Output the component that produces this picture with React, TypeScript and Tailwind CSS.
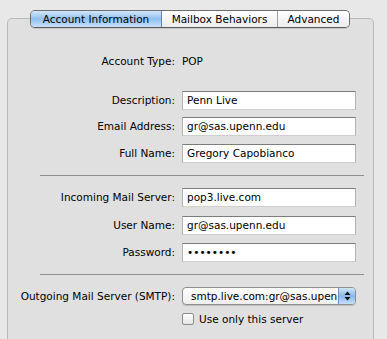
import React from "react";

const font = { fontFamily: '"DejaVu Sans", "Lucida Grande", sans-serif' };

function Field({ label, value, mt }: { label: string; value: string; mt: string }) {
  return (
    <div className={`flex items-center h-[19px] ${mt}`}>
      <div className="w-[167px] text-right text-[10.5px] text-black leading-none">{label}</div>
      <div className="ml-[7px] w-[174px] h-[19px] bg-white border border-[#b3b3b3] border-t-[#7d7d7d] border-b-[#cfcfcf] flex items-center pl-[4px] text-[10.5px] text-black leading-none overflow-hidden whitespace-nowrap">
        {value}
      </div>
    </div>
  );
}

export default function App() {
  return (
    <div className="w-[387px] h-[339px] bg-[#e8e8e8] overflow-hidden pt-[18px] pl-[7px]" style={font}>
      <div className="relative w-[367px] h-[340px] bg-[#e0e0e0] border border-[#bababa] rounded-t-[5px]">
        {/* Tabs */}
        <div className="absolute left-[22px] top-[-9px] flex h-[18px] rounded-[5px] border border-[#6e6e6e] border-b-[#5a5a5a] overflow-hidden shadow-[0_1px_1px_rgba(0,0,0,0.12)]">
          <div className="w-[131px] flex items-center justify-center text-[10.5px] text-black leading-none bg-gradient-to-b from-[#d3e6fa] via-[#8fbfef] to-[#c9e2fb] border-r border-[#6a83a8]">
            Account Information
          </div>
          <div className="w-[116px] flex items-center justify-center text-[10.5px] text-black leading-none bg-gradient-to-b from-[#ffffff] to-[#ececec] border-r border-[#a0a0a0]">
            Mailbox Behaviors
          </div>
          <div className="w-[71px] flex items-center justify-center text-[10.5px] text-black leading-none bg-gradient-to-b from-[#ffffff] to-[#ececec]">
            Advanced
          </div>
        </div>

        <div className="pt-[33px]">
          <div className="flex items-center h-[19px]">
            <div className="w-[167px] text-right text-[10.5px] text-black leading-none">Account Type:</div>
            <div className="ml-[7px] text-[10.5px] text-black leading-none">POP</div>
          </div>

          <Field label="Description:" value="Penn Live" mt="mt-[20px]" />
          <Field label="Email Address:" value="gr@sas.upenn.edu" mt="mt-[7px]" />
          <Field label="Full Name:" value="Gregory Capobianco" mt="mt-[8px]" />

          <div className="mt-[12px] ml-[32px] w-[324px] h-px bg-[#8e8e8e]" />

          <Field label="Incoming Mail Server:" value="pop3.live.com" mt="mt-[12px]" />
          <Field label="User Name:" value="gr@sas.upenn.edu" mt="mt-[9px]" />
          <Field label="Password:" value="••••••••" mt="mt-[8px]" />

          <div className="mt-[12px] ml-[32px] w-[324px] h-px bg-[#8e8e8e]" />

          <div className="flex items-center h-[18px] mt-[12px]">
            <div className="w-[167px] text-right text-[10.5px] text-black leading-none">Outgoing Mail Server (SMTP):</div>
            <div className="ml-[7px] w-[174px] h-[18px] flex rounded-[4px] border border-[#8f8f8f] overflow-hidden bg-gradient-to-b from-[#ffffff] to-[#eeeeee] shadow-[0_1px_1px_rgba(0,0,0,0.15)]">
              <div className="flex-1 flex items-center pl-[8px] text-[10.5px] text-black leading-none overflow-hidden whitespace-nowrap">
                smtp.live.com:gr@sas.upen
              </div>
              <div className="w-[17px] border-l border-[#6f8fbf] bg-gradient-to-b from-[#cfe4fa] via-[#86b8ee] to-[#c6e0fb] flex items-center justify-center">
                <svg width="7" height="10" viewBox="0 0 7 10">
                  <polygon points="3.5,0.5 6.5,4 0.5,4" fill="#111" />
                  <polygon points="0.5,6 6.5,6 3.5,9.5" fill="#111" />
                </svg>
              </div>
            </div>
          </div>

          <div className="flex items-center h-[14px] mt-[7px]">
            <div className="ml-[174px] w-[12px] h-[12px] rounded-[2px] border border-[#8c8c8c] bg-gradient-to-b from-[#ffffff] to-[#e6e6e6]" />
            <div className="ml-[5px] text-[10.5px] text-black leading-none">Use only this server</div>
          </div>
        </div>
      </div>
    </div>
  );
}
